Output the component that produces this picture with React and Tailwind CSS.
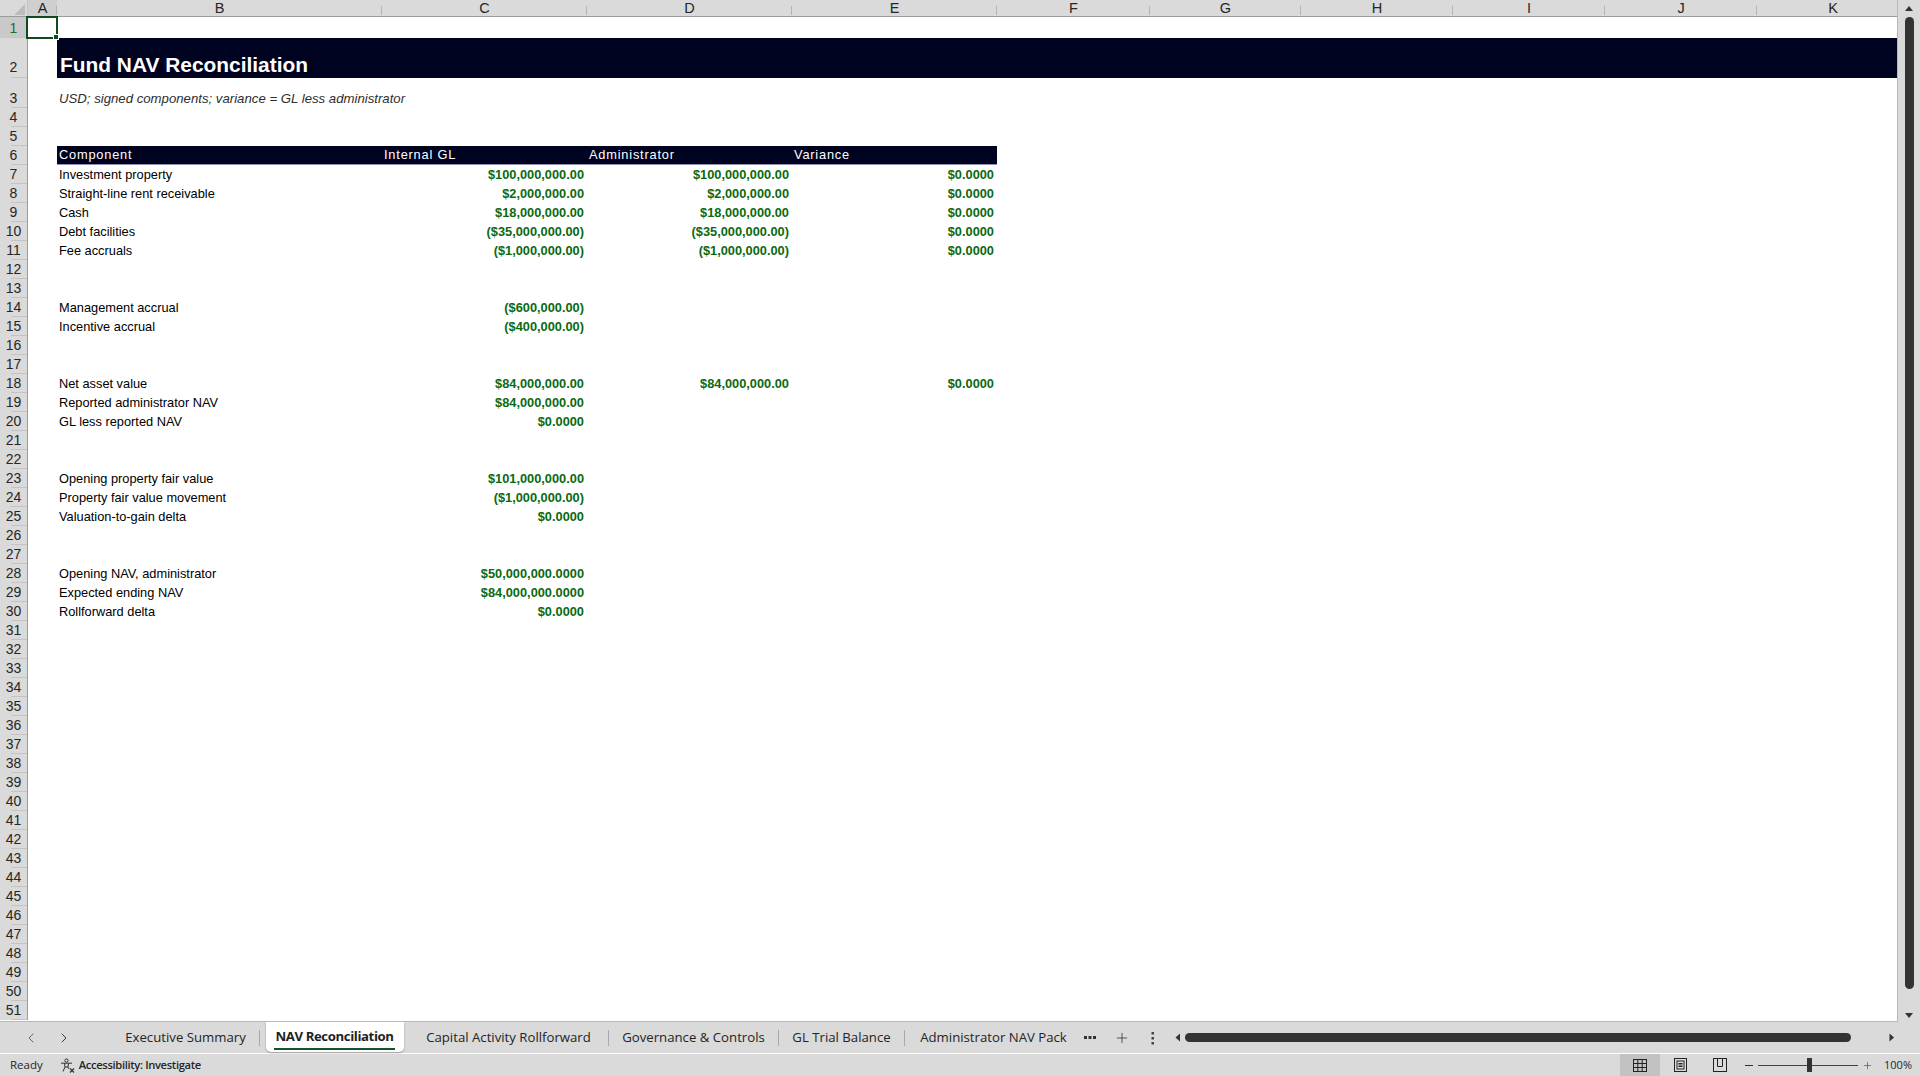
import React from 'react';
import { ChevronLeft, ChevronRight, Plus } from 'lucide-react';

const GRID =
  'grid grid-cols-[28px_29px_325px_205px_205px_205px_153px_151px_152px_152px_152px_152px]';
const LETTERS = ['A', 'B', 'C', 'D', 'E', 'F', 'G', 'H', 'I', 'J', 'K'];

const DATA = {
  7: ['Investment property', '$100,000,000.00', '$100,000,000.00', '$0.0000'],
  8: ['Straight-line rent receivable', '$2,000,000.00', '$2,000,000.00', '$0.0000'],
  9: ['Cash', '$18,000,000.00', '$18,000,000.00', '$0.0000'],
  10: ['Debt facilities', '($35,000,000.00)', '($35,000,000.00)', '$0.0000'],
  11: ['Fee accruals', '($1,000,000.00)', '($1,000,000.00)', '$0.0000'],
  14: ['Management accrual', '($600,000.00)'],
  15: ['Incentive accrual', '($400,000.00)'],
  18: ['Net asset value', '$84,000,000.00', '$84,000,000.00', '$0.0000'],
  19: ['Reported administrator NAV', '$84,000,000.00'],
  20: ['GL less reported NAV', '$0.0000'],
  23: ['Opening property fair value', '$101,000,000.00'],
  24: ['Property fair value movement', '($1,000,000.00)'],
  25: ['Valuation-to-gain delta', '$0.0000'],
  28: ['Opening NAV, administrator', '$50,000,000.0000'],
  29: ['Expected ending NAV', '$84,000,000.0000'],
  30: ['Rollforward delta', '$0.0000'],
};

const TABS = [
  { name: 'Executive Summary', w: 'w-[147px]', sep: true },
  { name: 'NAV Reconciliation', w: 'w-[149px]', active: true },
  { name: 'Capital Activity Rollforward', w: 'w-[199px]', sep: true },
  { name: 'Governance & Controls', w: 'w-[169px]', sep: true },
  { name: 'GL Trial Balance', w: 'w-[125px]', sep: true },
  { name: 'Administrator NAV Pack', w: 'w-[177px]' },
];

function RowHead({ n }) {
  return (
    <div
      className={
        n === 1
          ? 'relative flex items-end justify-center border-r border-[#9b9b9b] bg-[#c9c9c9] pb-[3px] text-[14px] leading-none text-[#1d6b34]'
          : n === 2
            ? 'relative flex items-end justify-center border-r border-[#9b9b9b] bg-[#dadada] pb-[4px] text-[14px] leading-none text-[#262626]'
            : 'relative flex items-end justify-center border-r border-[#9b9b9b] bg-[#dadada] pb-[3px] text-[14px] leading-none text-[#262626]'
      }
    >
      {n}
      <span className="absolute bottom-0 right-0 h-px w-[16px] bg-[#c3c3c3]" />
    </div>
  );
}

function Value({ v }) {
  return (
    <div className="whitespace-nowrap pr-[3px] text-right font-bold text-[#0b6a10]">{v}</div>
  );
}

function DataRow({ n }) {
  const d = DATA[n];
  return (
    <div className={`${GRID} h-[19px] leading-[19px]`}>
      <RowHead n={n} />
      <div />
      {d && <div className="whitespace-nowrap pl-[2px] text-black">{d[0]}</div>}
      {d && d[1] && <Value v={d[1]} />}
      {d && d[2] && <Value v={d[2]} />}
      {d && d[3] && <Value v={d[3]} />}
    </div>
  );
}

function ColumnHeader() {
  return (
    <div className={`${GRID} h-[17px] border-b border-[#9b9b9b] bg-[#dadada]`}>
      <div className="relative border-r border-[#c4c4c4]">
        <svg width="28" height="16" className="absolute left-0 top-0">
          <polygon points="14,15 25,15 25,4" fill="#bdbdbd" />
        </svg>
      </div>
      {LETTERS.map((l) => (
        <div
          key={l}
          className={
            l === 'A'
              ? 'relative flex items-center justify-center bg-[#cfcfcf] pt-[1px] text-[14.5px] leading-none text-[#1f1f1f]'
              : 'relative flex items-center justify-center pt-[1px] text-[14.5px] leading-none text-[#262626]'
          }
        >
          {l}
          <span className="absolute bottom-[1px] right-0 h-[9px] w-px bg-[#b3b3b3]" />
        </div>
      ))}
    </div>
  );
}

function Sheet() {
  const rest = [];
  for (let n = 7; n <= 51; n++) rest.push(n);
  return (
    <div className="relative h-[1022px] w-[1898px] overflow-hidden border-b border-r border-[#b8b8b8] bg-white font-['Liberation_Sans',Arial,sans-serif] text-[12.8px]">
      <ColumnHeader />
      <div className={`${GRID} h-[21px]`}>
        <RowHead n={1} />
      </div>
      <div className={`${GRID} h-[40px]`}>
        <RowHead n={2} />
        <div />
        <div className="col-span-10 flex items-end bg-[#000320] pb-[2px] pl-[3px]">
          <span className="text-[20.9px] font-bold leading-none text-white">Fund NAV Reconciliation</span>
        </div>
      </div>
      <div className={`${GRID} h-[30px]`}>
        <RowHead n={3} />
        <div />
        <div className="col-span-4 flex items-end pb-[3px] pl-[2px]">
          <span className="whitespace-nowrap text-[13.2px] italic leading-none text-[#2e2e2e]">
            USD; signed components; variance = GL less administrator
          </span>
        </div>
      </div>
      <DataRow n={4} />
      <DataRow n={5} />
      <div className={`${GRID} h-[19px] leading-[18px]`}>
        <RowHead n={6} />
        <div />
        <div className="border-b border-[#8f93b8] bg-[#000320] pl-[2px] tracking-[0.8px] text-white">Component</div>
        <div className="border-b border-[#8f93b8] bg-[#000320] pl-[2px] tracking-[0.8px] text-white">Internal GL</div>
        <div className="border-b border-[#8f93b8] bg-[#000320] pl-[2px] tracking-[0.8px] text-white">Administrator</div>
        <div className="border-b border-[#8f93b8] bg-[#000320] pl-[2px] tracking-[0.8px] text-white">Variance</div>
      </div>
      {rest.map((n) => (
        <DataRow key={n} n={n} />
      ))}

      {/* active cell A1 */}
      <div className="absolute left-[26px] top-[16px] h-[23px] w-[32px] border-2 border-[#124a1f]" />
      <div className="absolute left-[53px] top-[34px] h-[6px] w-[6px] border border-white bg-[#124a1f]" />
    </div>
  );
}

function VScroll() {
  return (
    <div className="flex h-[1022px] w-[22px] flex-col items-center bg-[#dadada]">
      <svg width="10" height="7" className="mt-[5px]">
        <polygon points="1,6 9,6 5,1" fill="#333" />
      </svg>
      <div className="mt-[5px] h-[972px] w-[9px] rounded-full bg-[#333333]" />
      <svg width="10" height="7" className="mt-auto mb-[3px]">
        <polygon points="1,1 9,1 5,6" fill="#333" />
      </svg>
    </div>
  );
}

function DotsH() {
  return (
    <svg width="12" height="4">
      <rect x="0" y="0" width="3" height="3" fill="#333" />
      <rect x="4.5" y="0" width="3" height="3" fill="#333" />
      <rect x="9" y="0" width="3" height="3" fill="#333" />
    </svg>
  );
}

function DotsV() {
  return (
    <svg width="4" height="14">
      <rect x="0.5" y="1" width="2.5" height="2.5" fill="#444" />
      <rect x="0.5" y="6" width="2.5" height="2.5" fill="#444" />
      <rect x="0.5" y="11" width="2.5" height="2.5" fill="#444" />
    </svg>
  );
}

function TabBar() {
  return (
    <div className="flex h-[32px] items-stretch border-b border-white bg-[#dadada] font-['Open_Sans',sans-serif] text-[13.2px] text-[#242424]">
      <div className="flex w-[112px] items-center">
        <ChevronLeft size={16} strokeWidth={1.4} className="ml-[23px] text-[#5e5e5e]" />
        <ChevronRight size={16} strokeWidth={1.4} className="ml-[17px] text-[#2e2e2e]" />
      </div>
      {TABS.map((t) => (
        <React.Fragment key={t.name}>
          {t.active ? (
            <div className={`${t.w} flex justify-center`}>
              <div className="flex h-[30px] w-[138px] flex-col items-center rounded-b-[5px] bg-white pt-[5px] shadow-[0_1px_2px_rgba(0,0,0,0.3)]">
                <span className="whitespace-nowrap font-bold leading-[18px] tracking-[-0.4px] text-[#1f1f1f]">{t.name}</span>
                <span className="mt-[3px] h-[2px] w-[121px] bg-[#14532a]" />
              </div>
            </div>
          ) : (
            <div className={`${t.w} flex items-center justify-center whitespace-nowrap`}>{t.name}</div>
          )}
          {t.sep && (
            <div className="flex items-center">
              <span className="h-[16px] w-px bg-[#a9a9a9]" />
            </div>
          )}
        </React.Fragment>
      ))}
      <div className="flex w-[16px] items-center justify-center">
        <DotsH />
      </div>
      <div className="ml-[16px] flex w-[16px] items-center justify-center">
        <Plus size={16} strokeWidth={1.2} className="text-[#333]" />
      </div>
      <div className="ml-[19px] flex w-[8px] items-center justify-center">
        <DotsV />
      </div>
      <div className="ml-[17px] flex w-[8px] items-center justify-center">
        <svg width="6" height="9">
          <polygon points="5,0.5 5,8.5 0.5,4.5" fill="#333" />
        </svg>
      </div>
      <div className="ml-[3px] flex items-center">
        <div className="h-[9px] w-[666px] rounded-full bg-[#333333]" />
      </div>
      <div className="ml-[38px] flex items-center">
        <svg width="6" height="9">
          <polygon points="0.5,0.5 0.5,8.5 5,4.5" fill="#333" />
        </svg>
      </div>
    </div>
  );
}

function AccessIcon() {
  return (
    <svg width="15" height="15" viewBox="0 0 15 15" fill="none" stroke="#333" strokeWidth="1">
      <circle cx="6.5" cy="2.5" r="1.6" />
      <path d="M1 5.2 L12 5.2" />
      <path d="M4.5 5.2 L5 9 L3 13.5" />
      <path d="M8.5 5.2 L8 9 L9 11" />
      <path d="M5 9 L8 9" />
      <path d="M10 10.5 L14 14.5 M14 10.5 L10 14.5" strokeWidth="1.2" />
    </svg>
  );
}

function StatusBar() {
  return (
    <div className="flex h-[22px] items-center bg-[#dadada] font-['Open_Sans',sans-serif] text-[11.5px] text-[#262626]">
      <span className="ml-[10px]">Ready</span>
      <span className="ml-[17px] flex items-center">
        <AccessIcon />
      </span>
      <span className="ml-[4px] text-[11.2px] font-semibold tracking-[-0.35px]">Accessibility: Investigate</span>

      <div className="ml-auto flex h-full items-stretch pr-[8px]">
        <div className="flex w-[40px] items-center justify-center bg-[#c2c2c2]">
          <svg width="14" height="13" viewBox="0 0 14 13" fill="none" stroke="#222" strokeWidth="1">
            <rect x="0.5" y="0.5" width="13" height="12" />
            <path d="M4.8 0.5 V12.5 M9.2 0.5 V12.5 M0.5 4.5 H13.5 M0.5 8.5 H13.5" />
          </svg>
        </div>
        <div className="flex w-[40px] items-center justify-center">
          <svg width="13" height="14" viewBox="0 0 13 14" fill="none" stroke="#222" strokeWidth="1">
            <rect x="0.5" y="0.5" width="12" height="13" />
            <rect x="3" y="3" width="7" height="8" />
            <path d="M4.5 5.5 H8.5 M4.5 7 H8.5 M4.5 8.5 H8.5" />
          </svg>
        </div>
        <div className="flex w-[40px] items-center justify-center">
          <svg width="14" height="14" viewBox="0 0 14 14" fill="none" stroke="#222" strokeWidth="1">
            <rect x="0.5" y="0.5" width="13" height="13" />
            <path d="M4.5 0.5 V8.5 H9.5 V0.5" />
          </svg>
        </div>
        <div className="flex w-[18px] items-center justify-center">
          <span className="h-px w-[8px] bg-[#333]" />
        </div>
        <div className="relative flex w-[100px] items-center">
          <span className="h-px w-full bg-[#444]" />
          <span className="absolute left-[49px] top-[4px] h-[14px] w-[5px] bg-[#333]" />
        </div>
        <div className="flex w-[18px] items-center justify-center">
          <Plus size={11} strokeWidth={1.2} className="text-[#333]" />
        </div>
        <div className="flex w-[36px] items-center justify-end text-[11px]">100%</div>
      </div>
    </div>
  );
}

export default function App() {
  return (
    <div className="flex h-[1076px] w-[1920px] flex-col overflow-hidden bg-[#dadada]">
      <div className="flex">
        <Sheet />
        <VScroll />
      </div>
      <TabBar />
      <StatusBar />
    </div>
  );
}
